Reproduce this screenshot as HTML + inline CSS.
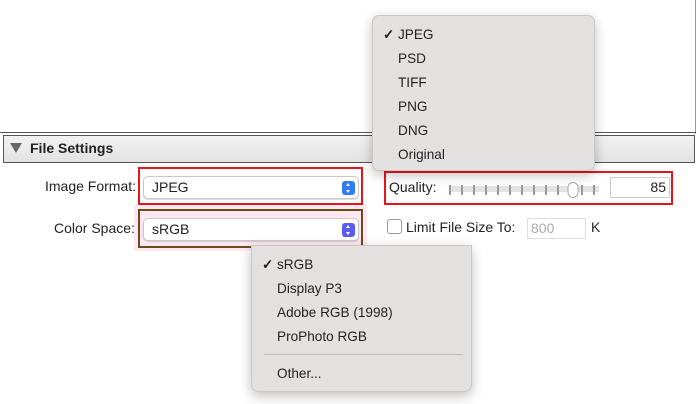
<!DOCTYPE html>
<html><head><style>
body{margin:0;width:700px;height:404px;background:#fff;position:relative;overflow:hidden;font-family:"Liberation Sans",sans-serif;font-size:14px;color:#222}
.a{position:absolute}
.menu{position:absolute;background:#e2e1df;border:1px solid #c9c8c6;border-radius:7px;box-shadow:0 4px 12px rgba(0,0,0,.25)}
.it{position:absolute;font-size:13.6px;color:#222}
.ck{font-weight:bold}
.pop{position:absolute;background:#fff;border:1px solid #c8c8c8;border-radius:5px;box-shadow:0 1px 1px rgba(0,0,0,.15)}
.step{position:absolute;right:3px;top:4px;width:13px;height:14px;border-radius:3px;background:#2f7cf6}
.step:before{content:"";position:absolute;left:4px;top:2px;border:2.5px solid transparent;border-bottom:3px solid #fff;border-top:0}
.step:after{content:"";position:absolute;left:4px;bottom:2px;border:2.5px solid transparent;border-top:3px solid #fff;border-bottom:0}
</style></head><body>
<div class="a" style="left:695px;top:0;width:1px;height:134px;background:#999"></div>
<div class="a" style="left:0;top:132px;width:696px;height:1px;background:#555"></div>
<div class="a" style="left:3px;top:135px;width:690px;height:26px;border:1px solid #555;background:linear-gradient(#f2f2f2,#e2e2e2)"></div>
<div class="a" style="left:10px;top:143px;border-left:6px solid transparent;border-right:6px solid transparent;border-top:10px solid #666"></div>
<div class="a" style="left:30px;top:140px;font-weight:bold;font-size:14px">File Settings</div>

<div class="a" style="left:45px;top:178px">Image Format:</div>
<div class="a" style="left:138px;top:167px;width:221px;height:34px;border:2px solid #e8141b"></div>
<div class="pop" style="left:143px;top:176px;width:214px;height:21px"><span class="a" style="left:8px;top:2px">JPEG</span><div class="step"></div></div>

<div class="a" style="left:134px;top:205px;width:233px;height:46px;background:#fde8f2"></div>
<div class="a" style="left:54px;top:220px">Color Space:</div>
<div class="a" style="left:138px;top:209px;width:221px;height:35px;border:2px solid #6b4a1c"></div>
<div class="pop" style="left:143px;top:218px;width:214px;height:21px"><span class="a" style="left:8px;top:2px">sRGB</span><div class="step" style="background:#5a5cf0"></div></div>

<div class="a" style="left:384px;top:171px;width:285px;height:30px;border:2px solid #e8141b"></div>
<div class="a" style="left:389px;top:179px">Quality:</div>
<div class="a" style="left:449px;top:186px;width:150px;height:6px;background:#e2e2e2"></div>
<svg class="a" style="left:448px;top:182px" width="155" height="16">
<g stroke="#999" stroke-width="2">
<line x1="2" y1="3" x2="2" y2="13"/><line x1="14" y1="3" x2="14" y2="13"/><line x1="26" y1="3" x2="26" y2="13"/><line x1="38" y1="3" x2="38" y2="13"/><line x1="50" y1="3" x2="50" y2="13"/><line x1="62" y1="3" x2="62" y2="13"/><line x1="74" y1="3" x2="74" y2="13"/><line x1="86" y1="3" x2="86" y2="13"/><line x1="98" y1="3" x2="98" y2="13"/><line x1="110" y1="3" x2="110" y2="13"/><line x1="134" y1="3" x2="134" y2="13"/><line x1="146" y1="3" x2="146" y2="13"/></g>
<rect x="120" y="0.5" width="10" height="15" rx="5" fill="#fff" stroke="#aaa"/></svg>
<div class="a" style="left:610px;top:177px;width:58px;height:19px;border:1px solid #ccc;text-align:right;line-height:19px"><span style="margin-right:3px">85</span></div>

<div class="a" style="left:387px;top:219px;width:13px;height:13px;border:1px solid #999;border-radius:3px"></div>
<div class="a" style="left:406px;top:219px">Limit File Size To:</div>
<div class="a" style="left:527px;top:218px;width:57px;height:19px;border:1px solid #ddd;color:#aaa;line-height:19px"><span style="margin-left:3px">800</span></div>
<div class="a" style="left:591px;top:219px">K</div>

<div class="menu" style="left:372px;top:15px;width:221px;height:154px">
<span class="it ck" style="left:10px;top:11px">✓</span>
<span class="it" style="left:25px;top:11px">JPEG</span>
<span class="it" style="left:25px;top:35px">PSD</span>
<span class="it" style="left:25px;top:59px">TIFF</span>
<span class="it" style="left:25px;top:83px">PNG</span>
<span class="it" style="left:25px;top:107px">DNG</span>
<span class="it" style="left:25px;top:131px">Original</span>
</div>

<div class="menu" style="left:251px;top:245px;width:219px;height:145px;border-top-left-radius:0;border-top-right-radius:0">
<span class="it ck" style="left:10px;top:11px">✓</span>
<span class="it" style="left:25px;top:11px">sRGB</span>
<span class="it" style="left:25px;top:35px">Display P3</span>
<span class="it" style="left:25px;top:59px">Adobe RGB (1998)</span>
<span class="it" style="left:25px;top:83px">ProPhoto RGB</span>
<div class="a" style="left:12px;top:108px;width:199px;height:1px;background:#bbb"></div>
<span class="it" style="left:25px;top:120px">Other...</span>
</div>
</body></html>
